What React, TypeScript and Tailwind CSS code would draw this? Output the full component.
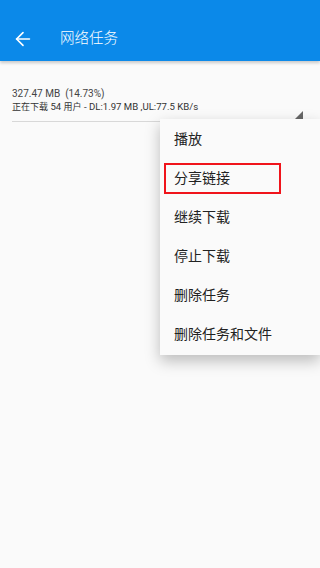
import { ArrowLeft } from "lucide-react";

const font = { fontFamily: '"Roboto", "Noto Sans CJK SC", sans-serif' };

const items = ["播放", "分享链接", "继续下载", "停止下载", "删除任务", "删除任务和文件"];

export default function App() {
  return (
    <div className="relative h-[568px] w-[320px] overflow-hidden bg-[#fafafa]" style={font}>
      {/* App bar */}
      <header className="flex h-[61px] items-center bg-[#0b89e9] pt-[16px] shadow-[0_2px_3px_rgba(0,0,0,0.2)]">
        <ArrowLeft className="ml-[12px] h-[22px] w-[22px] text-white" strokeWidth={1.8} />
        <h1 className="ml-[26px] text-[14.5px] font-light text-white">网络任务</h1>
      </header>

      {/* Task row */}
      <div className="relative mx-[12px] mt-[26px] border-b border-[#d8d8d8] pb-[7px]">
        <p className="text-[10px] leading-[13px] text-[#444]">327.47 MB&nbsp;&nbsp;(14.73%)</p>
        <p className="text-[9.6px] leading-[13px] text-[#333]">
          <span className="text-[9px]">正在下载</span> 54 <span className="text-[9px]">用户</span> - DL:1.97 MB ,UL:77.5 KB/s
        </p>
        <div className="absolute bottom-[2px] right-[5px] h-0 w-0 border-b-[8px] border-l-[8px] border-b-[#666] border-l-transparent" />
      </div>

      {/* Popup menu */}
      <div className="absolute left-[160px] top-[119px] w-[160px] bg-[#fafafa] py-[1px] shadow-[0_6px_14px_rgba(0,0,0,0.25)]">
        {items.map((t, i) => (
          <div key={t} className="flex h-[39px] items-center px-[4px]">
            <div
              className={
                i === 1
                  ? "flex h-[31px] w-[117px] items-center border-2 border-[#f0141b] pl-[8px] text-[14px] text-[#222]"
                  : "pl-[10px] text-[14px] text-[#222]"
              }
            >
              {t}
            </div>
          </div>
        ))}
      </div>
    </div>
  );
}
